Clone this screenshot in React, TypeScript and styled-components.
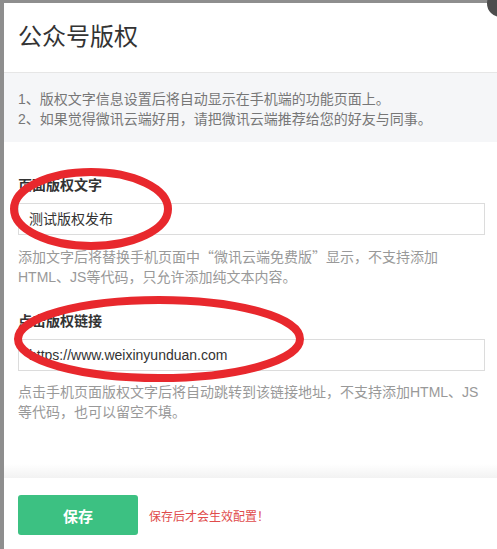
import React from 'react';
import styled, { createGlobalStyle } from 'styled-components';

const GlobalStyle = createGlobalStyle`
  html, body {
    margin: 0;
    padding: 0;
    background: #8e8e8e;
    overflow: hidden;
  }
  body {
    font-family: "Liberation Sans", "Noto Sans CJK SC", sans-serif;
  }
`;

const Stage = styled.div`
  position: relative;
  width: 497px;
  height: 549px;
  overflow: hidden;
  padding: 3px 0 0 4px;
  box-sizing: border-box;
`;

const Modal = styled.div`
  width: 520px;
  background: #fff;
  display: flex;
  flex-direction: column;
`;

const Header = styled.div`
  height: 70px;
  box-sizing: border-box;
  padding: 17px 0 0 14px;
  border-bottom: 1px solid #e6e6e6;
`;

const Title = styled.h3`
  margin: 0;
  font-family: "Noto Sans CJK SC", sans-serif;
  font-size: 24px;
  line-height: 30px;
  font-weight: normal;
  color: #333;
`;

const Notice = styled.div`
  background: #f5f6f8;
  padding: 16px 14px 13px;
  font-size: 14px;
  line-height: 20px;
  color: #777;
`;

const Body = styled.div`
  padding: 33px 0 56px 14px;
  width: 481px;
  box-sizing: content-box;
  background: linear-gradient(to bottom, #fff calc(100% - 14px), #f2f2f2);
  margin-right: 25px;
`;

const Field = styled.div<{ $first?: boolean }>`
  display: flex;
  flex-direction: column;
  margin-top: ${(p) => (p.$first ? '0' : '24px')};
  width: 467px;
`;

const Label = styled.label`
  font-size: 14px;
  line-height: 20px;
  font-weight: bold;
  color: #333;
`;

const Input = styled.div`
  margin-top: 8px;
  height: 32px;
  box-sizing: border-box;
  border: 1px solid #dcdcdc;
  padding: 0 10px;
  font-size: 14px;
  line-height: 30px;
  color: #333;
`;

const Help = styled.p`
  margin: 11px 0 0;
  font-size: 14px;
  line-height: 20px;
  color: #999;
`;

const Quote = styled.span`
  font-family: "Noto Sans CJK SC", sans-serif;
`;

const Footer = styled.div`
  display: flex;
  align-items: center;
  gap: 11px;
  padding: 17px 0 20px 14px;
`;

const SaveButton = styled.button`
  width: 120px;
  height: 40px;
  border: 0;
  border-radius: 3px;
  background: #3cc182;
  color: #fff;
  font-family: "Noto Sans CJK SC", sans-serif;
  font-size: 15px;
  font-weight: bold;
`;

const Hint = styled.span`
  font-size: 12px;
  color: #e04c4c;
`;

const CloseDot = styled.div`
  position: absolute;
  right: -17px;
  top: -10px;
  width: 27px;
  height: 27px;
  border-radius: 50%;
  background: #4d4d4d;
`;

const Marks = styled.svg`
  position: absolute;
  left: 0;
  top: 0;
  pointer-events: none;
`;

export default function App() {
  return (
    <Stage>
      <GlobalStyle />
      <Modal>
        <Header>
          <Title>公众号版权</Title>
        </Header>
        <Notice>
          <div>1、版权文字信息设置后将自动显示在手机端的功能页面上。</div>
          <div>2、如果觉得微讯云端好用，请把微讯云端推荐给您的好友与同事。</div>
        </Notice>
        <Body>
          <Field $first>
            <Label>页面版权文字</Label>
            <Input>测试版权发布</Input>
            <Help>
              添加文字后将替换手机页面中<Quote>“微讯云端免费版”</Quote>显示，不支持添加HTML、JS等代码，只允许添加纯文本内容。
            </Help>
          </Field>
          <Field>
            <Label>点击版权链接</Label>
            <Input>https://www.weixinyunduan.com</Input>
            <Help>点击手机页面版权文字后将自动跳转到该链接地址，不支持添加HTML、JS等代码，也可以留空不填。</Help>
          </Field>
        </Body>
        <Footer>
          <SaveButton>保存</SaveButton>
          <Hint>保存后才会生效配置！</Hint>
        </Footer>
      </Modal>
      <CloseDot />
      <Marks width="497" height="549" viewBox="0 0 497 549">
        <ellipse cx="91" cy="209" rx="77" ry="37" fill="none" stroke="#e8282d" strokeWidth="8" />
        <ellipse cx="159" cy="339" rx="141" ry="39" fill="none" stroke="#e8282d" strokeWidth="8" />
      </Marks>
    </Stage>
  );
}
